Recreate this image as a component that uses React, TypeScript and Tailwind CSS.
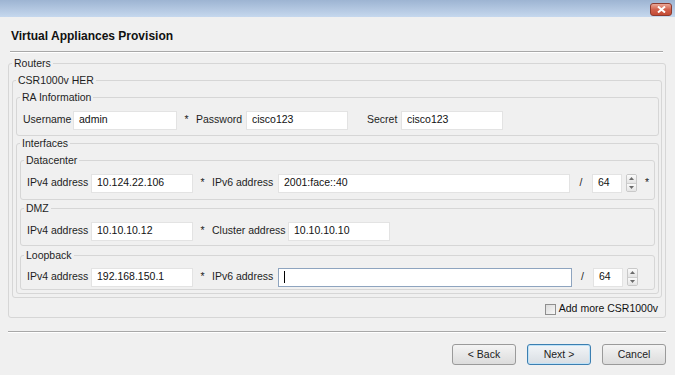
import React from 'react';

const FONT = "font-['Liberation_Sans',Arial,sans-serif]";

function Box({ title, className, children }: { title: string; className: string; children: React.ReactNode }) {
    return (
        <fieldset className={`min-w-0 border border-[#d6d6d6] rounded-[3px] pl-[3px] ${className}`}>
            <legend className="px-[2px] leading-[14px] text-[#1e1e1e]">{title}</legend>
            {children}
        </fieldset>
    );
}

function Field({ value, className, focus }: { value?: string; className: string; focus?: boolean }) {
    return (
        <div
            className={`h-[19px] shrink-0 bg-white border flex items-center pl-[5px] text-[#111] ${focus ? 'border-[#8ea4bf]' : 'border-[#e3e3e3]'
                } ${className}`}
        >
            {focus && <span className="w-px h-[12px] bg-black" />}
            {value}
        </div>
    );
}

function Spinner() {
    return (
        <div className="ml-[4px] w-[11px] h-[18px] flex flex-col border border-[#c9c9c9] rounded-[2px] overflow-hidden">
            <div className="flex-1 bg-linear-to-b from-[#fbfbfb] to-[#e4e4e4] flex items-center justify-center border-b border-[#cfcfcf]">
                <svg width="5" height="3" viewBox="0 0 5 3"><path d="M0 3 L2.5 0 L5 3 Z" fill="#6b6b6b" /></svg>
            </div>
            <div className="flex-1 bg-linear-to-b from-[#fbfbfb] to-[#e4e4e4] flex items-center justify-center">
                <svg width="5" height="3" viewBox="0 0 5 3"><path d="M0 0 L2.5 3 L5 0 Z" fill="#6b6b6b" /></svg>
            </div>
        </div>
    );
}

const Star = () => <span className="w-[19px] text-center shrink-0">*</span>;

export default function App() {
    return (
        <div className={`w-[675px] h-[375px] overflow-hidden bg-[#f0f0f0] text-[10.5px] text-[#1e1e1e] ${FONT}`}>

            {/* window title bar */}
            <div className="h-[17px] bg-linear-to-b from-[#9db4d2] to-[#c6d8ee] flex justify-end">
                <div className="mt-[3px] mr-[3px] w-[22px] h-[13px] rounded-[3px] border border-[#8c3b2f] bg-linear-to-b from-[#e9a898] via-[#d2614c] to-[#c34a34] flex items-center justify-center">
                    <svg width="9" height="7" viewBox="0 0 9 7">
                        <path d="M1 0.5 L8 6.5 M8 0.5 L1 6.5" stroke="#fff" strokeWidth="2" />
                    </svg>
                </div>
            </div>

            {/* header */}
            <div className="pt-[11px] pl-[11px] text-[12px] leading-[16px] font-bold text-[#111]">
                Virtual Appliances Provision
            </div>
            <div className="mt-[7px] ml-[10px] w-[653px] border-t border-[#a8a8a8] border-b border-b-white" />

            {/* routers */}
            <Box title="Routers" className="mt-[3px] ml-[8px] mr-[9px] pt-[3px] pr-[3px] pb-[1px]">
                <Box title="CSR1000v HER" className="pt-[3px] pr-[2px] pb-[3px]">

                    <Box title="RA Information" className="pt-[6px] pb-[5px]">
                        <div className="h-[20px] pl-[3px] flex items-center">
                            <span className="w-[50px] shrink-0">Username</span>
                            <Field value="admin" className="w-[104px]" />
                            <Star />
                            <span className="w-[50px] shrink-0">Password</span>
                            <Field value="cisco123" className="w-[102px]" />
                            <span className="ml-[19px] w-[34px] shrink-0">Secret</span>
                            <Field value="cisco123" className="w-[102px]" />
                        </div>
                    </Box>

                    <Box title="Interfaces" className="pt-[3px] pr-[3px] pb-[3px]">

                        <Box title="Datacenter" className="pt-[6px] pb-[6px]">
                            <div className="h-[20px] pl-[3px] flex items-center">
                                <span className="w-[64px] shrink-0">IPv4 address</span>
                                <Field value="10.124.22.106" className="w-[102px]" />
                                <Star />
                                <span className="w-[66px] shrink-0">IPv6 address</span>
                                <Field value="2001:face::40" className="w-[292px]" />
                                <span className="w-[22px] text-center shrink-0">/</span>
                                <Field value="64" className="w-[30px]" />
                                <Spinner />
                                <span className="ml-[8px]">*</span>
                            </div>
                        </Box>

                        <Box title="DMZ" className="mt-[1px] pt-[6px] pb-[4px]">
                            <div className="h-[20px] pl-[3px] flex items-center">
                                <span className="w-[64px] shrink-0">IPv4 address</span>
                                <Field value="10.10.10.12" className="w-[102px]" />
                                <Star />
                                <span className="w-[76px] shrink-0">Cluster address</span>
                                <Field value="10.10.10.10" className="w-[102px]" />
                            </div>
                        </Box>

                        <Box title="Loopback" className="mt-[2px] pt-[5px] pb-[2px]">
                            <div className="h-[20px] pl-[3px] flex items-center">
                                <span className="w-[64px] shrink-0">IPv4 address</span>
                                <Field value="192.168.150.1" className="w-[102px]" />
                                <Star />
                                <span className="w-[66px] shrink-0">IPv6 address</span>
                                <Field focus className="w-[294px]" />
                                <span className="w-[21px] text-center shrink-0">/</span>
                                <Field value="64" className="w-[30px]" />
                                <Spinner />
                            </div>
                        </Box>

                    </Box>
                </Box>

                {/* add more */}
                <div className="mt-[4px] h-[14px] flex items-center justify-end pr-[4px]">
                    <span className="w-[11px] h-[11px] border border-[#8f8f8f] bg-linear-to-br from-[#dcdcdc] to-[#f8f8f8] mr-[3px]" />
                    <span className="text-[#111]">Add more CSR1000v</span>
                </div>
            </Box>

            {/* footer */}
            <div className="mt-[13px] ml-[8px] mr-[9px] border-t border-[#a8a8a8] border-b border-b-white" />
            <div className="mt-[11px] pr-[9px] flex justify-end gap-[11px]">
                <button className="w-[64px] h-[21px] rounded-[3px] border border-[#9a9a9a] bg-linear-to-b from-[#f4f4f4] to-[#dcdcdc] text-[#222]">
                    &lt; Back
                </button>
                <button className="w-[64px] h-[21px] rounded-[3px] border border-[#3c7fb1] bg-linear-to-b from-[#f2f5f8] to-[#d9dee3] text-[#222] shadow-[inset_0_0_0_1px_#bfe2f7]">
                    Next &gt;
                </button>
                <button className="w-[64px] h-[21px] rounded-[3px] border border-[#9a9a9a] bg-linear-to-b from-[#f4f4f4] to-[#dcdcdc] text-[#222]">
                    Cancel
                </button>
            </div>

        </div>
    );
}
